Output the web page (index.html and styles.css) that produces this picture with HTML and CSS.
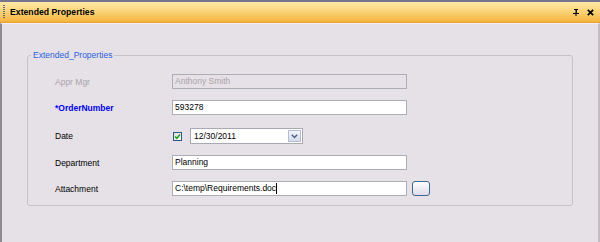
FILE: index.html
```html
<!DOCTYPE html>
<html lang="en">
<head>
  <meta charset="UTF-8">
  <title>Extended Properties</title>
  <link rel="stylesheet" href="styles.css">
</head>
<body>
  <div class="panel">
    <div class="titlebar">
      <span class="grip"></span>
      <span class="title">Extended Properties</span>
      <span class="tool-icons">
        <svg width="6" height="7" viewBox="0 0 6 7"><path d="M1 0h4v1H4v3h2v1H3.5v2h-1V5H0V4h2V1H1z" fill="#000"/><path d="M2.6 1h.5v3h-.5z" fill="#fff"/></svg>
        <svg width="7" height="7" viewBox="0 0 7 7"><path d="M0.8 0.8L6.2 6.2M6.2 0.8L0.8 6.2" stroke="#000" stroke-width="1.7"/></svg>
      </span>
    </div>
    <div class="content">
      <fieldset class="group">
        <legend>Extended_Properties</legend>
        <div class="rows">
          <div class="row">
            <label class="lbl disabled">Appr Mgr</label>
            <div class="box readonly">Anthony Smith</div>
          </div>
          <div class="row">
            <label class="lbl required">*OrderNumber</label>
            <div class="box">593278</div>
          </div>
          <div class="row date-row">
            <label class="lbl">Date</label>
            <div class="date-field">
              <span class="check">
                <svg width="7" height="7" viewBox="0 0 7 7"><path d="M1 3.5l1.8 1.8L6 1.5" stroke="#21a121" stroke-width="1.6" fill="none"/></svg>
              </span>
              <div class="picker">
                <span class="picker-text">12/30/2011</span>
                <span class="drop">
                  <svg width="7" height="5" viewBox="0 0 7 5"><path d="M0.8 0.8L3.5 3.5L6.2 0.8" stroke="#4d6185" stroke-width="1.5" fill="none"/></svg>
                </span>
              </div>
            </div>
          </div>
          <div class="row">
            <label class="lbl">Department</label>
            <div class="box">Planning</div>
          </div>
          <div class="row">
            <label class="lbl">Attachment</label>
            <div class="box">C:\temp\Requirements.doc<span class="caret"></span></div>
            <button class="browse"></button>
          </div>
        </div>
      </fieldset>
    </div>
  </div>
</body>
</html>
```

FILE: styles.css
```css
body {
  margin: 0;
  font-family: "Liberation Sans", Arial, sans-serif;
  font-size: 8.5px;
  background-color: #e6e0e7;
}

.panel {
  width: 600px;
  height: 242px;
  display: flex;
  flex-direction: column;
  box-sizing: border-box;
  border-top: 2px solid #75738e;
}

.titlebar {
  height: 20px;
  display: flex;
  align-items: center;
  background: linear-gradient(to bottom, #fdeaa6 0%, #fbd479 45%, #f5b43f 100%);
  border-bottom: 1px solid #e5a233;
}

.grip {
  width: 2px;
  height: 14px;
  margin-left: 3px;
  background-image: repeating-linear-gradient(to bottom, #6c6a80 0, #6c6a80 1px, transparent 1px, transparent 2px);
}

.title {
  margin-left: 5px;
  font-weight: bold;
  font-size: 8.7px;
  color: #000;
}

.tool-icons {
  margin-left: auto;
  margin-right: 6px;
  display: flex;
  gap: 8px;
  align-items: center;
}

.content {
  flex: 1;
  border-left: 2px solid #8e8b8e;
  border-right: 2px solid #c4bec4;
  border-top: 1px solid #f4f0f4;
  padding: 26px 25px 0 25px;
}

.group {
  margin: 0;
  width: 546px;
  box-sizing: border-box;
  padding: 0;
  border: 1px solid #c8c2c8;
  border-radius: 3px;
}

.group legend {
  margin-left: 3px;
  padding: 0 2px;
  color: #2b5fd9;
  font-size: 8.5px;
}

.rows {
  display: flex;
  flex-direction: column;
  gap: 11px;
  padding: 14px 0 9px 27px;
}

.row {
  display: flex;
  align-items: center;
  height: 15px;
}

.date-row {
  height: 16px;
  margin-top: 2px;
}

.lbl {
  width: 117px;
  flex-shrink: 0;
  color: #000;
}

.lbl.disabled {
  color: #a9a5a9;
}

.lbl.required {
  color: #0000f0;
  font-weight: bold;
}

.box {
  width: 235px;
  height: 15px;
  box-sizing: border-box;
  border: 1px solid #adadb5;
  background-color: #fff;
  padding: 0 0 0 2px;
  line-height: 13px;
  color: #000;
  display: flex;
  align-items: center;
}

.box.readonly {
  background-color: #e6e0e7;
  color: #a9a5a9;
}

.caret {
  width: 1px;
  height: 11px;
  background-color: #000;
}

.date-field {
  display: flex;
  align-items: center;
}

.check {
  width: 9px;
  height: 9px;
  box-sizing: border-box;
  margin-left: 1px;
  border: 1px solid #2f5986;
  background: linear-gradient(135deg, #dcdcd6, #fdfdfb);
  display: flex;
  align-items: center;
  justify-content: center;
}

.picker {
  margin-left: 8px;
  width: 113px;
  height: 16px;
  box-sizing: border-box;
  border: 1px solid #a9a9b3;
  background-color: #fff;
  display: flex;
  align-items: center;
  padding-left: 3px;
}

.picker-text {
  flex: 1;
}

.drop {
  width: 13px;
  height: 12px;
  margin-right: 1px;
  box-sizing: border-box;
  border: 1px solid #b5bdd0;
  background: linear-gradient(to bottom, #f2f4fa, #d5dbea);
  display: flex;
  align-items: center;
  justify-content: center;
}

.browse {
  margin-left: 5px;
  width: 18px;
  height: 15px;
  padding: 0;
  box-sizing: border-box;
  border: 1px solid #3e6792;
  border-radius: 3px;
  background: linear-gradient(to bottom, #ffffff, #dcdbe8);
}
```
